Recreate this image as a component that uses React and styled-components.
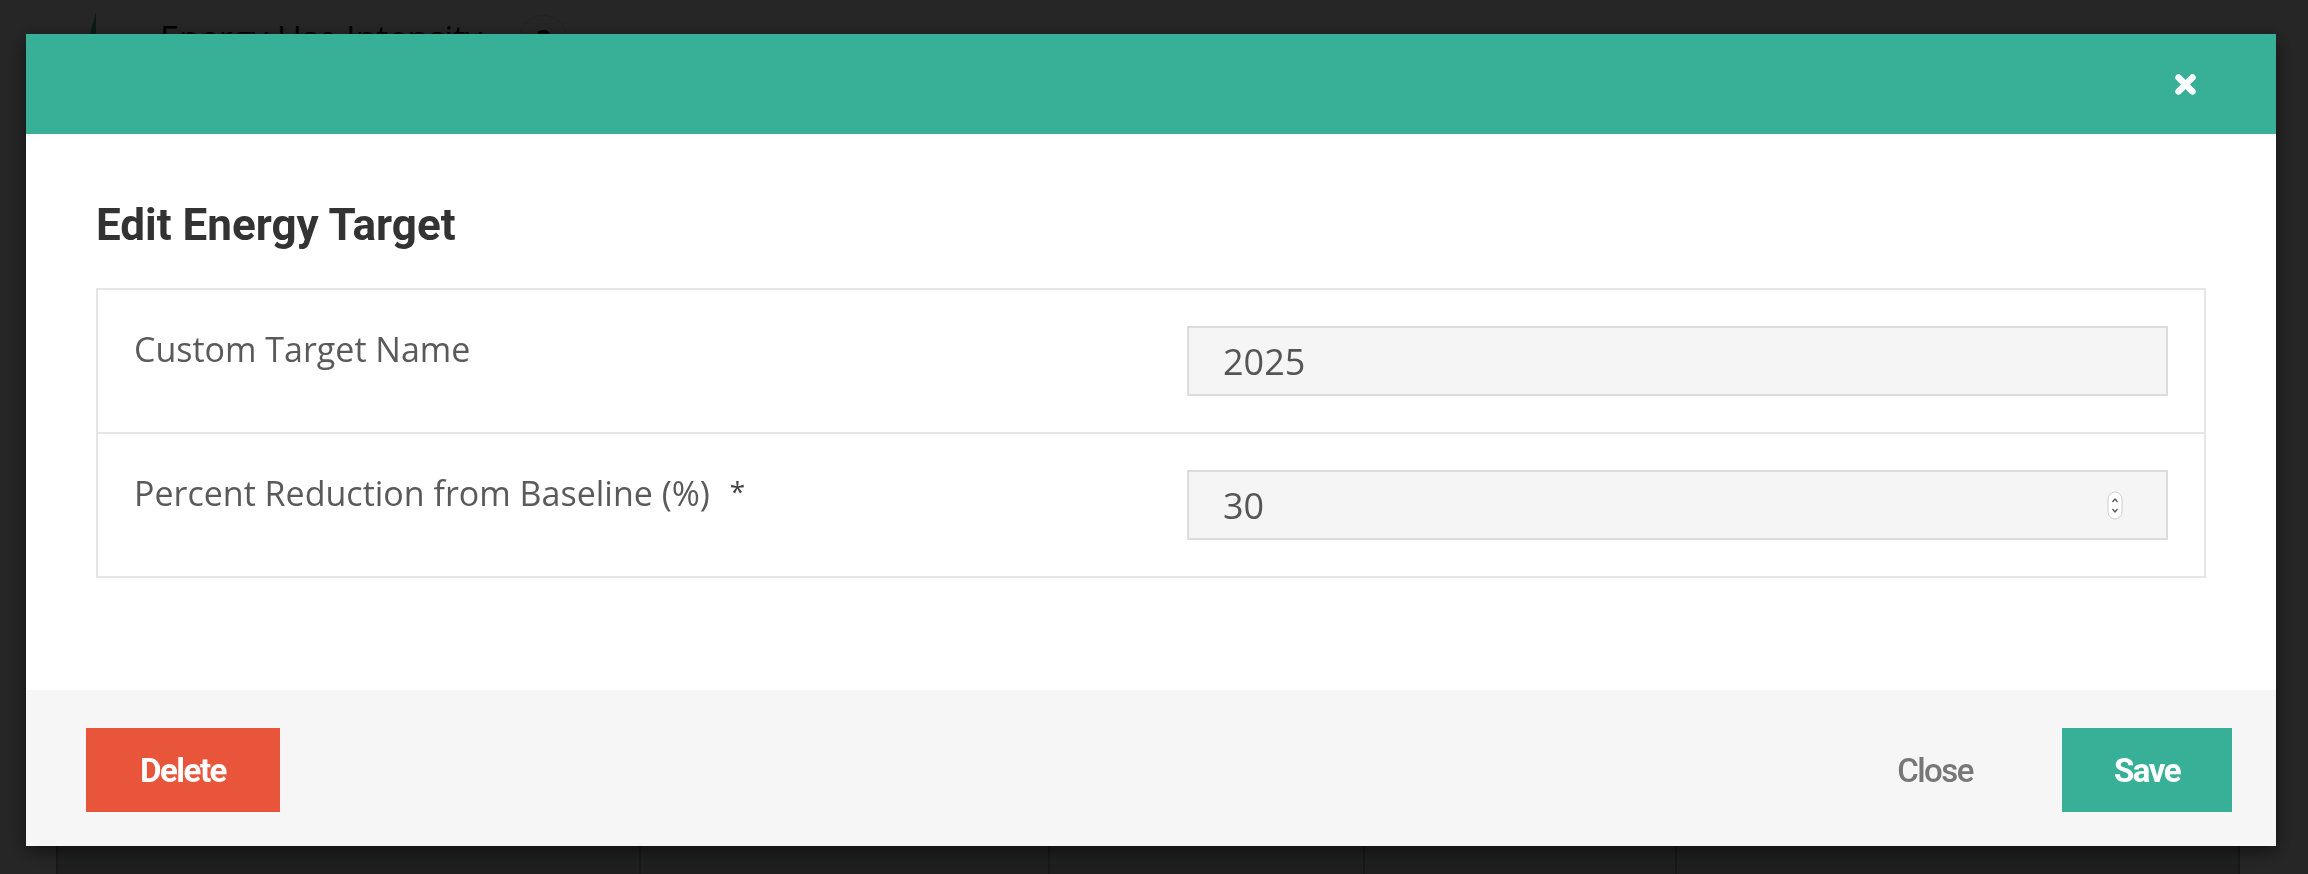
import React from "react";
import styled, { createGlobalStyle } from "styled-components";

const GlobalStyle = createGlobalStyle`
  html, body {
    margin: 0;
    height: 100%;
  }
  body {
    background: #fbfbfb;
    font-family: "Open Sans", "Noto Sans", sans-serif;
    overflow: hidden;
  }
  #root {
    height: 100%;
  }
`;

const Page = styled.div`
  height: 874px;
  display: flex;
  flex-direction: column;
  padding: 0 68px 0 56px;
  box-sizing: border-box;
`;

const PageHeader = styled.div`
  display: flex;
  align-items: flex-start;
  padding: 12px 0 0 24px;
  .page-title {
    margin: 3px 37px 0 48px;
    font-size: 34px;
    font-weight: 400;
    color: #000;
  }
  .help {
    margin-top: 3px;
    width: 47px;
    height: 47px;
    border-radius: 50%;
    background: #ffffff;
    border: 1px solid #e0e0e0;
    color: #222;
    font-size: 28px;
    font-weight: 700;
    display: flex;
    align-items: center;
    justify-content: center;
  }
`;

const DataTable = styled.div`
  margin-top: auto;
  display: grid;
  grid-template-columns: 583px 409px 315px 312px 565px;
  background: #cdd0d3;
  border-right: 2px solid #a0a0a0;
`;

const DataCell = styled.div`
  height: 120px;
  border-left: 2px solid #a0a0a0;
`;

const Overlay = styled.div`
  position: fixed;
  inset: 0;
  background: rgba(0, 0, 0, 0.85);
`;

const Modal = styled.div`
  position: fixed;
  top: 34px;
  left: 26px;
  width: 2250px;
  background: #fff;
  box-shadow: 0 5px 18px rgba(0, 0, 0, 0.55);
  display: flex;
  flex-direction: column;
`;

const ModalHeader = styled.div`
  height: 100px;
  background: #38b097;
  display: flex;
  align-items: center;
  justify-content: flex-end;
  padding-right: 79px;
`;

const CloseX = styled.button`
  border: 0;
  padding: 0;
  background: transparent;
  width: 23px;
  height: 23px;
  display: flex;
  cursor: pointer;
`;

const ModalBody = styled.div`
  padding: 65px 70px 112px;
`;

const Title = styled.h2`
  margin: 0 0 37px;
  font-family: Roboto, "Open Sans", sans-serif;
  font-weight: 700;
  font-size: 44px;
  line-height: 52px;
  color: #333;
`;

const FormTable = styled.div`
  border: 2px solid #e6e6e6;
`;

const FormRow = styled.div`
  display: grid;
  grid-template-columns: 1fr 1fr;
  & + & {
    border-top: 2px solid #e6e6e6;
  }
`;

const Cell = styled.div`
  padding: 36px;
  position: relative;
`;

const Label = styled.div`
  font-size: 34px;
  color: #5a5a5a;
  .req {
    margin-left: 20px;
    font-size: 28px;
    color: #444;
    vertical-align: 4px;
  }
`;

const Field = styled.div`
  position: relative;
`;

const Input = styled.input`
  display: block;
  width: 100%;
  height: 70px;
  box-sizing: border-box;
  border: 2px solid #dcdcdc;
  background: #f5f5f5;
  padding: 0 34px;
  font-family: "Open Sans", sans-serif;
  font-size: 36px;
  color: #555;
  outline: none;
`;

const Spinner = styled.svg`
  position: absolute;
  right: 45px;
  top: 21px;
`;

const ModalFooter = styled.div`
  background: #f6f6f6;
  display: flex;
  align-items: center;
  padding: 38px 44px 34px 60px;
`;

const Button = styled.button`
  height: 84px;
  width: ${(props) => props.$width || "auto"};
  padding: ${(props) => (props.$width ? "0" : "0 44px")};
  margin-right: ${(props) => props.$gap || "0"};
  border: 0;
  background: ${(props) => props.$bg || "transparent"};
  color: ${(props) => props.$color || "#fff"};
  font-family: Roboto, "Open Sans", sans-serif;
  font-weight: ${(props) => props.$weight || 700};
  font-size: 33px;
  letter-spacing: -1.5px;
  cursor: pointer;
`;

const Spacer = styled.div`
  flex: 1;
`;

const App = () => {
  return (
    <>
      <GlobalStyle />
      <Page>
        <PageHeader>
          <svg width="32" height="60" viewBox="0 0 32 60">
            <polygon points="16,0 16,60 0,60" fill="#38b097" />
            <polygon points="16,22 32,60 16,60" fill="#2a8a74" />
          </svg>
          <div className="page-title">Energy Use Intensity</div>
          <div className="help">?</div>
        </PageHeader>
        <DataTable>
          {[0, 1, 2, 3, 4].map((i) => (
            <DataCell key={i} />
          ))}
        </DataTable>
      </Page>
      <Overlay />
      <Modal>
        <ModalHeader>
          <CloseX aria-label="Close">
            <svg width="23" height="23" viewBox="0 0 23 23">
              <path
                d="M4.5 4.5 L18.5 18.5 M18.5 4.5 L4.5 18.5"
                stroke="#fff"
                strokeWidth="6.5"
                strokeLinecap="round"
              />
            </svg>
          </CloseX>
        </ModalHeader>
        <ModalBody>
          <Title>Edit Energy Target</Title>
          <FormTable>
            <FormRow>
              <Cell>
                <Label>Custom Target Name</Label>
              </Cell>
              <Cell>
                <Input type="text" defaultValue="2025" />
              </Cell>
            </FormRow>
            <FormRow>
              <Cell>
                <Label>
                  Percent Reduction from Baseline (%)
                  <span className="req">*</span>
                </Label>
              </Cell>
              <Cell>
                <Field>
                  <Input type="text" defaultValue="30" />
                  <Spinner width="16" height="29" viewBox="0 0 16 29">
                    <rect
                      x="1"
                      y="1"
                      width="14"
                      height="27"
                      rx="7"
                      fill="#fff"
                      stroke="#cfcfcf"
                    />
                    <path
                      d="M5.5 11 L8 8 L10.5 11 M5.5 18 L8 21 L10.5 18"
                      stroke="#555"
                      strokeWidth="1.3"
                      fill="none"
                    />
                  </Spinner>
                </Field>
              </Cell>
            </FormRow>
          </FormTable>
        </ModalBody>
        <ModalFooter>
          <Button $width="194px" $bg="#e8553a">
            Delete
          </Button>
          <Spacer />
          <Button $color="#777" $weight={500} $gap="45px">
            Close
          </Button>
          <Button $width="170px" $bg="#38b097">
            Save
          </Button>
        </ModalFooter>
      </Modal>
    </>
  );
};

export default App;
